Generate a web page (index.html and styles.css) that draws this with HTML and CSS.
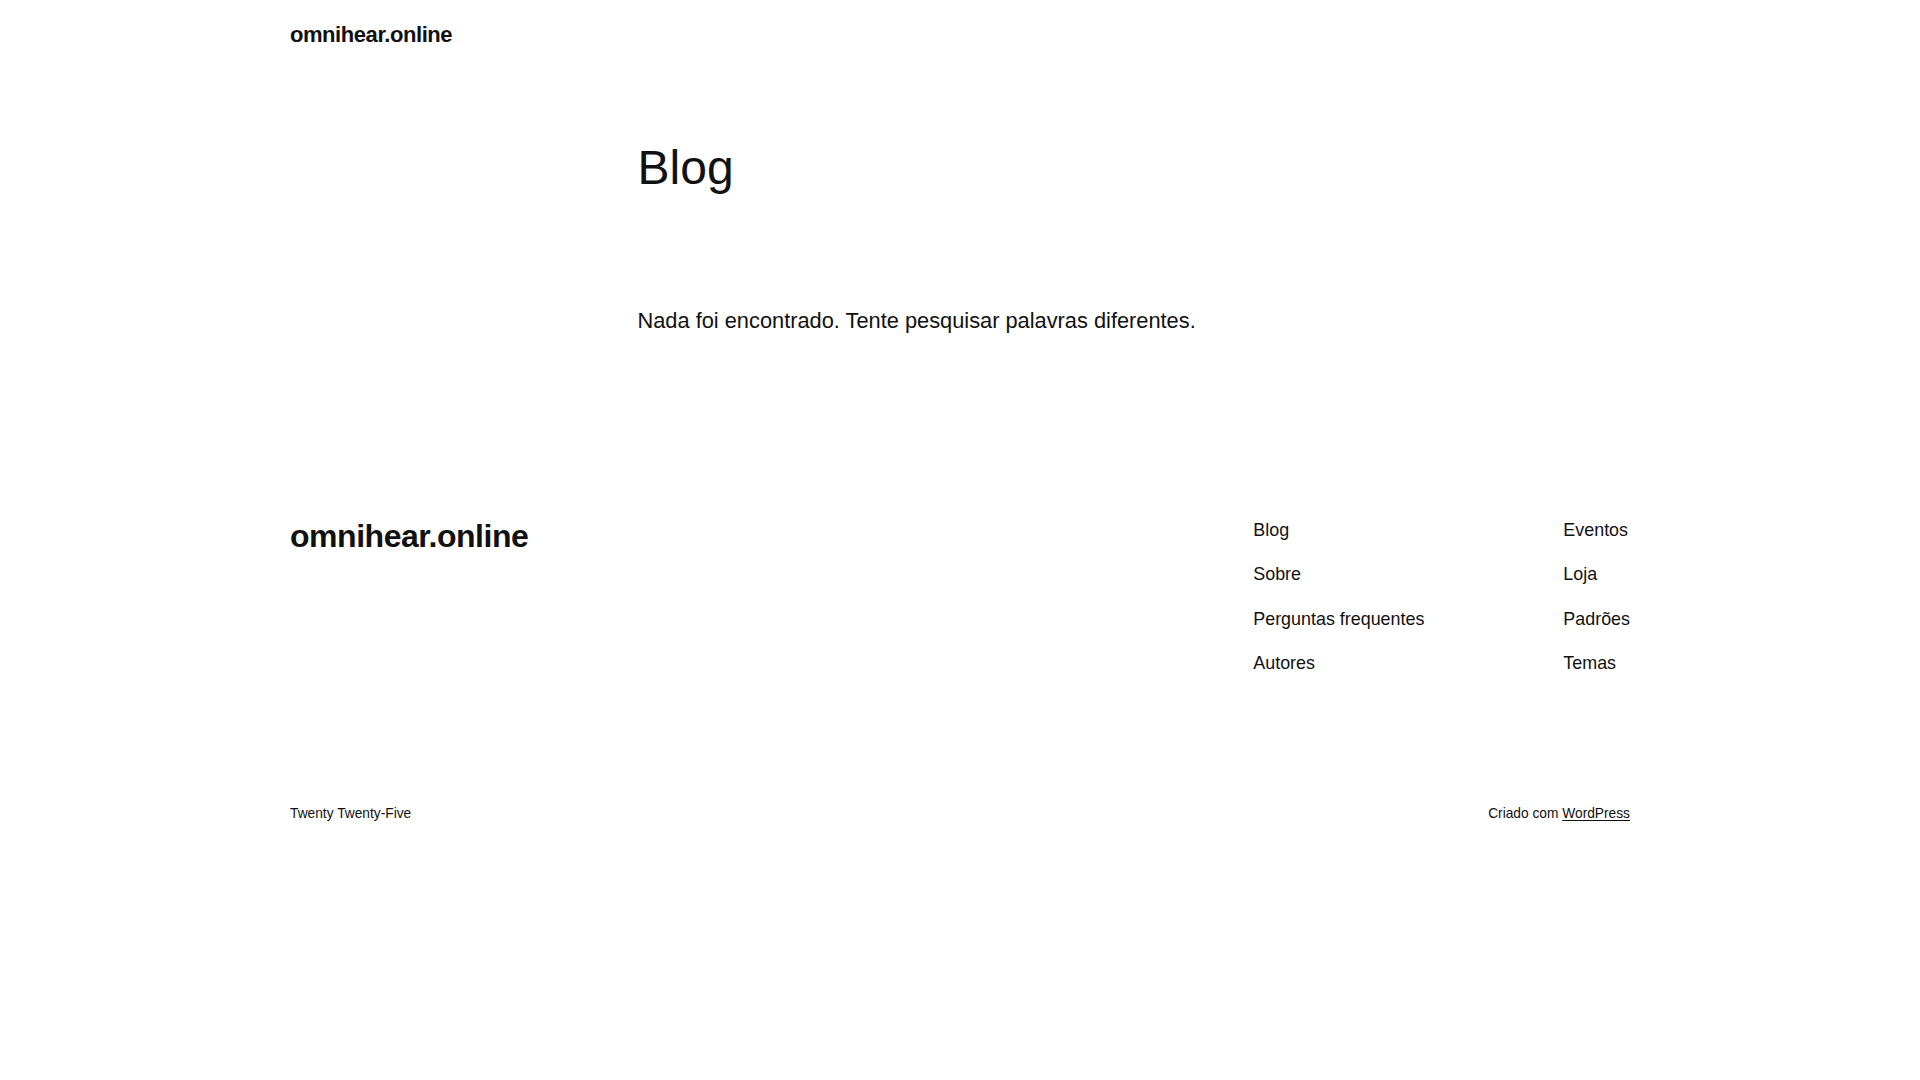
FILE: index.html
```html
<!DOCTYPE html>
<html lang="pt-BR">
<head>
<meta charset="utf-8">
<title>Blog – omnihear.online</title>
<link rel="stylesheet" href="styles.css">
</head>
<body>
<header class="site-header">
  <div class="wide">
    <a class="site-title" href="#">omnihear.online</a>
  </div>
</header>
<main class="site-main">
  <div class="content">
    <h1 class="page-title">Blog</h1>
    <p class="no-results">Nada foi encontrado. Tente pesquisar palavras diferentes.</p>
  </div>
</main>
<footer class="site-footer">
  <div class="wide footer-top">
    <a class="footer-title" href="#">omnihear.online</a>
    <nav class="footer-nav">
      <ul class="nav-col">
        <li><a href="#">Blog</a></li>
        <li><a href="#">Sobre</a></li>
        <li><a href="#">Perguntas frequentes</a></li>
        <li><a href="#">Autores</a></li>
      </ul>
      <ul class="nav-col">
        <li><a href="#">Eventos</a></li>
        <li><a href="#">Loja</a></li>
        <li><a href="#">Padrões</a></li>
        <li><a href="#">Temas</a></li>
      </ul>
    </nav>
  </div>
  <div class="wide footer-bottom">
    <span class="credit">Twenty Twenty-Five</span>
    <span class="credit">Criado com <a class="wp-link" href="#">WordPress</a></span>
  </div>
</footer>
</body>
</html>
```

FILE: styles.css
```css
html, body {
  margin: 0;
  padding: 0;
  background: #ffffff;
}

body {
  font-family: "Liberation Sans", Arial, sans-serif;
  color: #111111;
}

a {
  color: #111111;
  text-decoration: none;
}

.wide {
  width: 1340px;
  margin: 0 auto;
}

.site-header {
  padding-top: 20.2px;
}

.site-title {
  display: inline-block;
  font-size: 22px;
  line-height: 1.4;
  font-weight: 700;
  letter-spacing: -0.44px;
}

.content {
  width: 645px;
  margin: 0 auto;
}

.page-title {
  margin: 87.6px 0 0 0;
  font-size: 48px;
  line-height: 1.2;
  font-weight: 400;
}

.no-results {
  margin: 109.2px 0 0 0;
  font-size: 21.8px;
  line-height: 1.5;
}

.footer-top {
  margin-top: 179px;
  display: flex;
  justify-content: space-between;
  align-items: flex-start;
}

.footer-title {
  font-size: 32px;
  line-height: 1.2;
  font-weight: 700;
  letter-spacing: -0.47px;
}

.footer-nav {
  display: flex;
  gap: 139px;
}

.nav-col {
  list-style: none;
  margin: 0;
  padding: 0;
  display: flex;
  flex-direction: column;
  gap: 17.4px;
}

.nav-col li {
  font-size: 17.9px;
  line-height: 27px;
}

.footer-bottom {
  margin-top: 127.2px;
  display: flex;
  justify-content: space-between;
  font-size: 13.75px;
  line-height: 1.5;
}

.wp-link {
  text-decoration: underline;
  text-underline-offset: 2px;
}
```
